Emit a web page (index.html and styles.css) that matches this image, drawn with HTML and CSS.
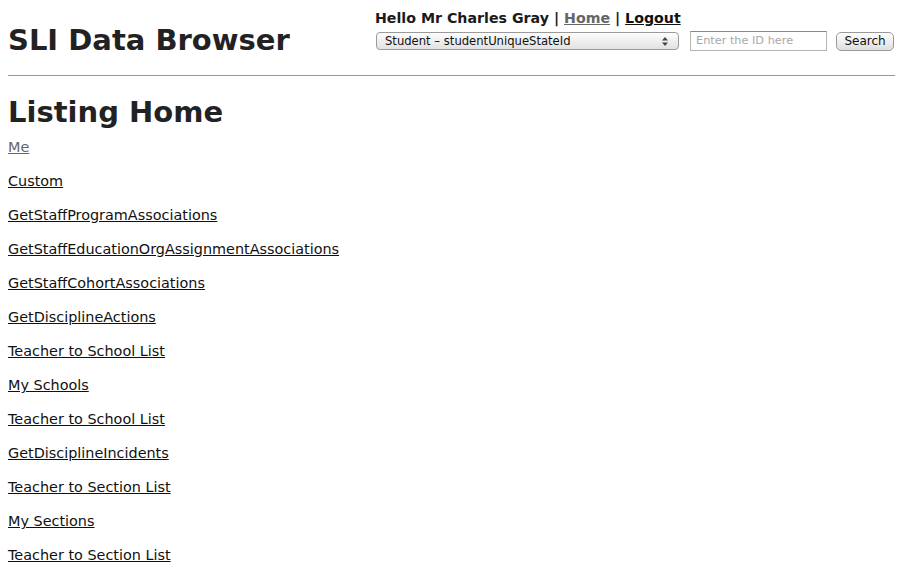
FILE: index.html
```html
<!DOCTYPE html>
<html>
<head>
<meta charset="utf-8">
<link rel="stylesheet" href="styles.css">
</head>
<body>
<div class="header">
  <h1 class="title">SLI Data Browser</h1>
  <div class="tools">
    <div class="greeting">Hello Mr Charles Gray | <a class="home" href="#">Home</a> | <a class="logout" href="#">Logout</a></div>
    <div class="search-row">
      <div class="select"><span>Student – studentUniqueStateId</span><svg class="arrows" width="6" height="9" viewBox="0 0 6 9"><path d="M3 0 L6 3.5 L0 3.5 Z M3 9 L6 5.5 L0 5.5 Z" fill="#444"/></svg></div>
      <div class="idbox">Enter the ID here</div>
      <div class="btn">Search</div>
    </div>
  </div>
</div>
<div class="rule"></div>
<h2 class="listing">Listing Home</h2>
<ul class="links">
  <li><a class="visited" href="#">Me</a></li>
  <li><a href="#">Custom</a></li>
  <li><a href="#">GetStaffProgramAssociations</a></li>
  <li><a href="#">GetStaffEducationOrgAssignmentAssociations</a></li>
  <li><a href="#">GetStaffCohortAssociations</a></li>
  <li><a href="#">GetDisciplineActions</a></li>
  <li><a href="#">Teacher to School List</a></li>
  <li><a href="#">My Schools</a></li>
  <li><a href="#">Teacher to School List</a></li>
  <li><a href="#">GetDisciplineIncidents</a></li>
  <li><a href="#">Teacher to Section List</a></li>
  <li><a href="#">My Sections</a></li>
  <li><a href="#">Teacher to Section List</a></li>
</ul>
</body>
</html>
```
FILE: styles.css
```css
body {
  margin: 0;
  padding: 0 8px;
  font-family: "DejaVu Sans", Verdana, sans-serif;
  color: #222;
  background: #fff;
}
.header {
  display: flex;
  align-items: flex-start;
  height: 74px;
}
.title {
  margin: 23px 0 0 0;
  font-size: 29px;
  line-height: 34px;
  font-weight: bold;
  width: 367px;
  flex: none;
}
.tools {
  padding-top: 9px;
}
.greeting {
  font-size: 14.2px;
  font-weight: bold;
  height: 22px;
  line-height: 18px;
  color: #1a1a1a;
}
.greeting a { color: #111; }
.greeting a.home { color: #666; }
.search-row {
  display: flex;
  align-items: flex-start;
}
.select {
  margin-left: 1px;
  margin-top: 1px;
  width: 293px;
  height: 16px;
  border: 1px solid #9a9a9a;
  border-radius: 4px;
  background: linear-gradient(#fefefe, #ececec 60%, #e2e2e2);
  font-size: 11.6px;
  line-height: 16px;
  padding: 0 0 0 8px;
  display: flex;
  justify-content: space-between;
  align-items: center;
  color: #111;
}
.arrows {
  margin-right: 10px;
}
.idbox {
  margin-left: 11px;
  width: 130px;
  height: 18px;
  border: 1px solid #b5b5b5;
  border-top-color: #8a8a8a;
  font-size: 11.3px;
  line-height: 18px;
  color: #a8a8a8;
  padding-left: 5px;
}
.btn {
  margin-left: 9px;
  margin-top: 1px;
  width: 56px;
  height: 17px;
  border: 1px solid #999;
  border-radius: 5px;
  background: linear-gradient(#fefefe, #ececec 60%, #dedede);
  font-size: 12px;
  line-height: 17px;
  text-align: center;
  color: #111;
}
.rule {
  height: 1px;
  background: #999;
  width: 887px;
  margin-top: 1px;
}
.listing {
  margin: 19px 0 0 0;
  font-size: 29px;
  font-weight: bold;
  line-height: 34px;
}
.links {
  list-style: none;
  margin: 10px 0 0 0;
  padding: 0;
}
.links li {
  height: 34px;
  font-size: 14.4px;
  line-height: 16px;
}
.links a {
  color: #111;
}
.links a.visited {
  color: #666;
}
```
